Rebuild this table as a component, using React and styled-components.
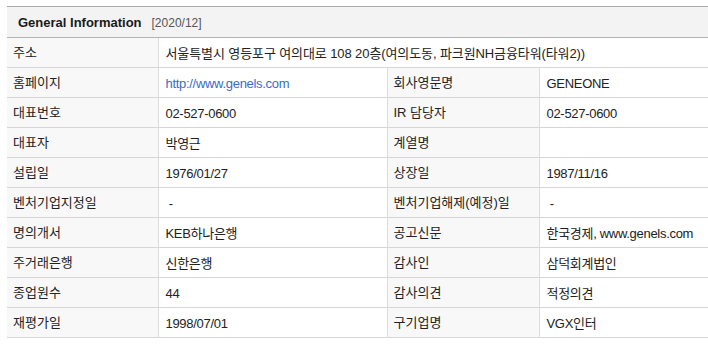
import React from "react";
import styled, { createGlobalStyle } from "styled-components";

const Global = createGlobalStyle`
  html, body { margin: 0; padding: 0; background: #fff; }
  body { font-family: "Liberation Sans", "Noto Sans CJK KR", sans-serif; }
`;

const Page = styled.div`
  padding: 6px 0 0 7px;
`;

const Table = styled.table`
  width: 701px;
  border-collapse: collapse;
  table-layout: fixed;
  border-top: 1px solid #a9a9a9;
  font-family: "Liberation Sans", "Noto Sans CJK KR", sans-serif;
  font-size: 13px;
  color: #222;
`;

const HeaderCell = styled.th`
  height: 30px;
  padding: 0 0 0 11px;
  background: #f3f3f3;
  border-bottom: 1px solid #b4b4b4;
  text-align: left;
  vertical-align: middle;
`;

const Title = styled.span`
  font-weight: bold;
  font-size: 13px;
  color: #1a1a1a;
`;

const Period = styled.span`
  margin-left: 10px;
  font-weight: normal;
  font-size: 12px;
  color: #555;
`;

const Row = styled.tr`
  height: 30px;
  border-bottom: 1px solid #d6d6d6;
`;

const Label = styled.td`
  padding: 0 0 0 6px;
  background: #f8f8f8;
  border-right: 1px solid #dcdcdc;
  border-left: ${(p) => (p.$first ? "none" : "1px solid #dcdcdc")};
  vertical-align: middle;
  line-height: 16px;
  white-space: nowrap;
  color: #222;
`;

const Value = styled.td`
  padding: 2px 0 0 7px;
  background: #fff;
  vertical-align: middle;
  line-height: 16px;
  white-space: nowrap;
  color: #222;
  letter-spacing: ${(p) => (p.$korean ? "-0.1px" : "-0.3px")};
`;

const Link = styled.a`
  color: #3a6cc8;
  text-decoration: none;
`;

const pairs = [
  [["홈페이지", <Link href="#">http://www.genels.com</Link>], ["회사영문명", "GENEONE"]],
  [["대표번호", "02-527-0600"], ["IR 담당자", "02-527-0600"]],
  [["대표자", "박영근"], ["계열명", ""]],
  [["설립일", "1976/01/27"], ["상장일", "1987/11/16"]],
  [["벤처기업지정일", "\u00a0-"], ["벤처기업해제(예정)일", "\u00a0-"]],
  [["명의개서", "KEB하나은행"], ["공고신문", "한국경제, www.genels.com"]],
  [["주거래은행", "신한은행"], ["감사인", "삼덕회계법인"]],
  [["종업원수", "44"], ["감사의견", "적정의견"]],
  [["재평가일", "1998/07/01"], ["구기업명", "VGX인터"]],
];

export default function App() {
  return (
    <Page>
      <Global />
      <Table>
        <colgroup>
          <col style={{ width: 151 }} />
          <col style={{ width: 229 }} />
          <col style={{ width: 152 }} />
          <col style={{ width: 169 }} />
        </colgroup>
        <thead>
          <tr>
            <HeaderCell colSpan={4}>
              <Title>General Information</Title>
              <Period>[2020/12]</Period>
            </HeaderCell>
          </tr>
        </thead>
        <tbody>
          <Row>
            <Label $first>주소</Label>
            <Value colSpan={3} $korean>
              서울특별시 영등포구 여의대로 108 20층(여의도동, 파크원NH금융타워(타워2))
            </Value>
          </Row>
          {pairs.map(([[l1, v1], [l2, v2]], i) => (
            <Row key={i}>
              <Label $first>{l1}</Label>
              <Value>{v1}</Value>
              <Label>{l2}</Label>
              <Value>{v2}</Value>
            </Row>
          ))}
        </tbody>
      </Table>
    </Page>
  );
}
